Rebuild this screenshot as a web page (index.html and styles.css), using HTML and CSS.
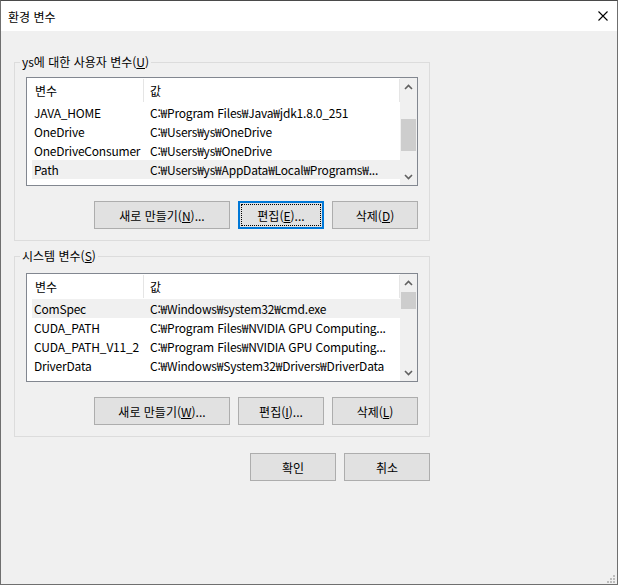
FILE: index.html
```html
<!DOCTYPE html>
<html lang="ko">
<head>
  <meta charset="UTF-8">
  <meta name="viewport" content="width=device-width, initial-scale=1.0">
  <title>환경 변수</title>
  <link rel="stylesheet" href="styles.css">
</head>
<body>
  <div class="window">
    <div class="titlebar">
      <span class="title">환경 변수</span>
      <svg class="close" width="10" height="10" viewBox="0 0 10 10">
        <path d="M0.5 0.5 L9.5 9.5 M9.5 0.5 L0.5 9.5" stroke="#000" stroke-width="1.1" fill="none"/>
      </svg>
    </div>

    <div class="dialog">
      <fieldset class="group group-user">
        <legend>ys에 대한 사용자 변수(<u>U</u>)</legend>
        <div class="list">
          <div class="list-body">
            <div class="list-head">
              <div class="head-cell head-name">변수</div>
              <div class="head-cell head-value">값</div>
            </div>
            <div class="row">
              <div class="cell-name">JAVA_HOME</div>
              <div class="cell-value">C:₩Program Files₩Java₩jdk1.8.0_251</div>
            </div>
            <div class="row">
              <div class="cell-name">OneDrive</div>
              <div class="cell-value">C:₩Users₩ys₩OneDrive</div>
            </div>
            <div class="row">
              <div class="cell-name">OneDriveConsumer</div>
              <div class="cell-value">C:₩Users₩ys₩OneDrive</div>
            </div>
            <div class="row selected">
              <div class="cell-name">Path</div>
              <div class="cell-value">C:₩Users₩ys₩AppData₩Local₩Programs₩...</div>
            </div>
          </div>
          <div class="scrollbar">
            <div class="sb-arrow">
              <svg width="9" height="6" viewBox="0 0 9 6"><polyline points="1,5 4.5,1.5 8,5" fill="none" stroke="#606060" stroke-width="1.6"/></svg>
            </div>
            <div class="sb-track">
              <div class="sb-thumb" style="margin-top:24px;height:32px"></div>
            </div>
            <div class="sb-arrow">
              <svg width="9" height="6" viewBox="0 0 9 6"><polyline points="1,1 4.5,4.5 8,1" fill="none" stroke="#606060" stroke-width="1.6"/></svg>
            </div>
          </div>
        </div>
        <div class="buttons">
          <button class="btn btn-wide">새로 만들기(<u>N</u>)...</button>
          <button class="btn focused">편집(<u>E</u>)...</button>
          <button class="btn">삭제(<u>D</u>)</button>
        </div>
      </fieldset>

      <fieldset class="group group-system">
        <legend>시스템 변수(<u>S</u>)</legend>
        <div class="list">
          <div class="list-body">
            <div class="list-head">
              <div class="head-cell head-name">변수</div>
              <div class="head-cell head-value">값</div>
            </div>
            <div class="row selected">
              <div class="cell-name">ComSpec</div>
              <div class="cell-value">C:₩Windows₩system32₩cmd.exe</div>
            </div>
            <div class="row">
              <div class="cell-name">CUDA_PATH</div>
              <div class="cell-value">C:₩Program Files₩NVIDIA GPU Computing...</div>
            </div>
            <div class="row">
              <div class="cell-name">CUDA_PATH_V11_2</div>
              <div class="cell-value">C:₩Program Files₩NVIDIA GPU Computing...</div>
            </div>
            <div class="row">
              <div class="cell-name">DriverData</div>
              <div class="cell-value">C:₩Windows₩System32₩Drivers₩DriverData</div>
            </div>
          </div>
          <div class="scrollbar">
            <div class="sb-arrow">
              <svg width="9" height="6" viewBox="0 0 9 6"><polyline points="1,5 4.5,1.5 8,5" fill="none" stroke="#606060" stroke-width="1.6"/></svg>
            </div>
            <div class="sb-track">
              <div class="sb-thumb" style="margin-top:1px;height:17px"></div>
            </div>
            <div class="sb-arrow">
              <svg width="9" height="6" viewBox="0 0 9 6"><polyline points="1,1 4.5,4.5 8,1" fill="none" stroke="#606060" stroke-width="1.6"/></svg>
            </div>
          </div>
        </div>
        <div class="buttons">
          <button class="btn btn-wide">새로 만들기(<u>W</u>)...</button>
          <button class="btn">편집(<u>I</u>)...</button>
          <button class="btn">삭제(<u>L</u>)</button>
        </div>
      </fieldset>

      <div class="buttons dialog-buttons">
        <button class="btn">확인</button>
        <button class="btn">취소</button>
      </div>

      <svg class="grip" width="8" height="8" viewBox="0 0 8 8">
        <rect x="6" y="0" width="2" height="2" fill="#bdbdbd"/>
        <rect x="3" y="3" width="2" height="2" fill="#bdbdbd"/>
        <rect x="6" y="3" width="2" height="2" fill="#bdbdbd"/>
        <rect x="0" y="6" width="2" height="2" fill="#bdbdbd"/>
        <rect x="3" y="6" width="2" height="2" fill="#bdbdbd"/>
        <rect x="6" y="6" width="2" height="2" fill="#bdbdbd"/>
      </svg>
    </div>
  </div>
</body>
</html>
```

FILE: styles.css
```css
body {
  margin: 0;
  font-family: "Noto Sans CJK KR", sans-serif;
  font-size: 12px;
  color: #000;
}
.window {
  width: 618px;
  height: 585px;
  box-sizing: border-box;
  border: 1px solid #6f6f6f;
  border-top-color: #4a4a4a;
  background-color: #f0f0f0;
  display: flex;
  flex-direction: column;
}
.titlebar {
  height: 30px;
  background-color: #fff;
  display: flex;
  align-items: center;
  justify-content: space-between;
  padding: 0 9px 0 7px;
}
.title {
  font-size: 12px;
}
.dialog {
  flex: 1;
  display: flex;
  flex-direction: column;
  padding-left: 13px;
}
.group {
  width: 416px;
  box-sizing: border-box;
  margin: 0;
  border: 1px solid #dcdcdc;
  padding: 7px 11px 11px 11px;
}
.group legend {
  padding: 0 2px;
  margin-left: -6px;
  line-height: 16px;
  height: 16px;
}
.group-user {
  margin-top: 23px;
}
.group-system {
  margin-top: 7px;
  padding-top: 9px;
}
.list {
  height: 109px;
  box-sizing: border-box;
  border: 1px solid #828790;
  background-color: #fff;
  display: flex;
}
.list-body {
  flex: 1;
  overflow: hidden;
}
.list-head {
  display: flex;
  padding: 1px 0;
}
.head-cell {
  height: 23px;
  line-height: 23px;
  border-right: 1px solid #e5e5e5;
}
.head-name {
  width: 108px;
  padding-left: 8px;
}
.head-value {
  flex: 1;
  padding-left: 6px;
}
.row {
  display: flex;
  height: 19px;
  line-height: 19px;
  margin-left: 5px;
  white-space: nowrap;
  letter-spacing: -0.2px;
}
.row.selected {
  background-color: #f0f0f0;
}
.cell-name {
  width: 109px;
  padding-left: 2px;
  overflow: hidden;
}
.cell-value {
  flex: 1;
  padding-left: 7px;
  overflow: hidden;
}
.scrollbar {
  width: 17px;
  background-color: #f0f0f0;
  display: flex;
  flex-direction: column;
}
.sb-arrow {
  height: 17px;
  display: flex;
  align-items: center;
  justify-content: center;
}
.sb-track {
  flex: 1;
}
.sb-thumb {
  margin: 0 1px;
  background-color: #cdcdcd;
}
.buttons {
  display: flex;
  justify-content: flex-end;
  gap: 8px;
  margin-top: 15px;
}
.btn {
  width: 86px;
  height: 28px;
  box-sizing: border-box;
  border: 1px solid #adadad;
  background-color: #e1e1e1;
  font-family: inherit;
  font-size: 12px;
  color: #000;
  padding: 0;
}
.btn-wide {
  width: 136px;
}
.btn.focused {
  border: 2px solid #0078d7;
  outline: 1px dotted #000;
  outline-offset: -4px;
}
.dialog-buttons {
  width: 416px;
  margin-top: 16px;
}
.grip {
  margin-top: auto;
  align-self: flex-end;
  margin-right: 2px;
  margin-bottom: 1px;
}
```
